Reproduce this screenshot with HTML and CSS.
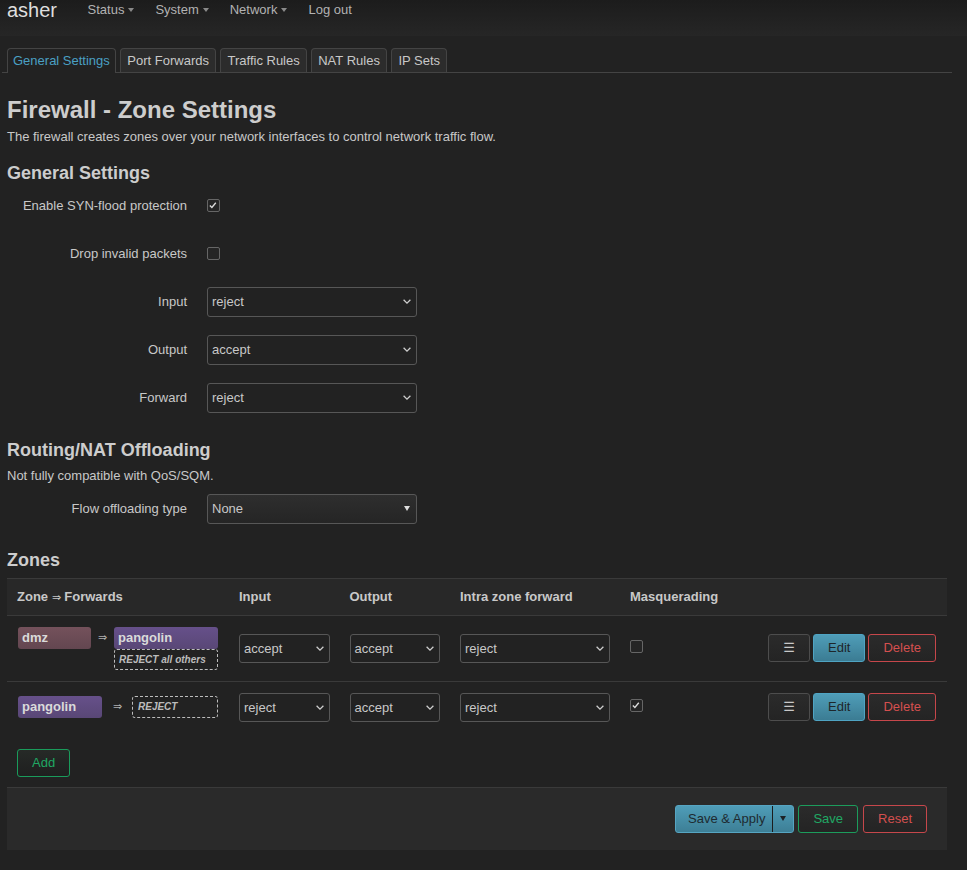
FILE: index.html
```html
<!DOCTYPE html>
<html lang="en">
<head>
<meta charset="utf-8">
<title>asher - Firewall - Zone Settings</title>
<link rel="stylesheet" href="styles.css">
</head>
<body>
<header class="topbar">
  <a class="brand">asher</a>
  <ul class="menu">
    <li>Status<span class="caret"></span></li>
    <li>System<span class="caret"></span></li>
    <li>Network<span class="caret"></span></li>
    <li>Log out</li>
  </ul>
</header>

<div class="main">
  <ul class="tabs">
    <li class="tab active">General Settings</li>
    <li class="tab">Port Forwards</li>
    <li class="tab">Traffic Rules</li>
    <li class="tab">NAT Rules</li>
    <li class="tab">IP Sets</li>
  </ul>

  <h2 class="title">Firewall - Zone Settings</h2>
  <p class="desc">The firewall creates zones over your network interfaces to control network traffic flow.</p>

  <h3 class="section">General Settings</h3>
  <div class="form">
    <div class="form-row">
      <div class="form-label">Enable SYN-flood protection</div>
      <span class="cb"><svg viewBox="0 0 13 13" width="11" height="11"><path d="M2.2 6.4 L4.6 8.8 L9.2 3.2" fill="none" stroke="#dcdcdc" stroke-width="1.6"/></svg></span>
    </div>
    <div class="form-row">
      <div class="form-label">Drop invalid packets</div>
      <span class="cb"></span>
    </div>
    <div class="form-row">
      <div class="form-label">Input</div>
      <div class="select"><span>reject</span><svg class="chev" viewBox="0 0 8 5" width="8" height="5"><path d="M0.6 0.8 L4 4.1 L7.4 0.8" fill="none" stroke="#cfcfcf" stroke-width="1.3"/></svg></div>
    </div>
    <div class="form-row">
      <div class="form-label">Output</div>
      <div class="select"><span>accept</span><svg class="chev" viewBox="0 0 8 5" width="8" height="5"><path d="M0.6 0.8 L4 4.1 L7.4 0.8" fill="none" stroke="#cfcfcf" stroke-width="1.3"/></svg></div>
    </div>
    <div class="form-row">
      <div class="form-label">Forward</div>
      <div class="select"><span>reject</span><svg class="chev" viewBox="0 0 8 5" width="8" height="5"><path d="M0.6 0.8 L4 4.1 L7.4 0.8" fill="none" stroke="#cfcfcf" stroke-width="1.3"/></svg></div>
    </div>
  </div>

  <h3 class="section section-routing">Routing/NAT Offloading</h3>
  <p class="desc desc-routing">Not fully compatible with QoS/SQM.</p>
  <div class="form form-offload">
    <div class="form-row">
      <div class="form-label">Flow offloading type</div>
      <div class="select select-flow"><span>None</span><span class="tri"></span></div>
    </div>
  </div>

  <h3 class="section section-zones">Zones</h3>
  <table class="zones">
    <colgroup>
      <col class="c-zone"><col class="c-in"><col class="c-out"><col class="c-intra"><col class="c-masq"><col class="c-act">
    </colgroup>
    <thead>
      <tr>
        <th>Zone <span class="th-arrow">⇒</span> Forwards</th>
        <th>Input</th>
        <th>Output</th>
        <th>Intra zone forward</th>
        <th>Masquerading</th>
        <th></th>
      </tr>
    </thead>
    <tbody>
      <tr>
        <td class="td-zone">
          <div class="zone-cell">
            <span class="zbadge z-dmz">dmz</span>
            <span class="arrow">⇒</span>
            <div class="fwd fwd-wide">
              <span class="zbadge z-pangolin">pangolin</span>
              <span class="reject">REJECT all others</span>
            </div>
          </div>
        </td>
        <td><div class="select sm"><span>accept</span><svg class="chev" viewBox="0 0 8 5" width="8" height="5"><path d="M0.6 0.8 L4 4.1 L7.4 0.8" fill="none" stroke="#cfcfcf" stroke-width="1.3"/></svg></div></td>
        <td><div class="select sm"><span>accept</span><svg class="chev" viewBox="0 0 8 5" width="8" height="5"><path d="M0.6 0.8 L4 4.1 L7.4 0.8" fill="none" stroke="#cfcfcf" stroke-width="1.3"/></svg></div></td>
        <td><div class="select sm"><span>reject</span><svg class="chev" viewBox="0 0 8 5" width="8" height="5"><path d="M0.6 0.8 L4 4.1 L7.4 0.8" fill="none" stroke="#cfcfcf" stroke-width="1.3"/></svg></div></td>
        <td><span class="cb cb-table"></span></td>
        <td class="td-act">
          <div class="act-btns">
            <button class="btn btn-menu">☰</button>
            <button class="btn btn-edit">Edit</button>
            <button class="btn btn-del">Delete</button>
          </div>
        </td>
      </tr>
      <tr>
        <td class="td-zone">
          <div class="zone-cell">
            <span class="zbadge z-pangolin z-pangolin-src">pangolin</span>
            <span class="arrow">⇒</span>
            <div class="fwd fwd-narrow">
              <span class="reject reject-only">REJECT</span>
            </div>
          </div>
        </td>
        <td><div class="select sm"><span>reject</span><svg class="chev" viewBox="0 0 8 5" width="8" height="5"><path d="M0.6 0.8 L4 4.1 L7.4 0.8" fill="none" stroke="#cfcfcf" stroke-width="1.3"/></svg></div></td>
        <td><div class="select sm"><span>accept</span><svg class="chev" viewBox="0 0 8 5" width="8" height="5"><path d="M0.6 0.8 L4 4.1 L7.4 0.8" fill="none" stroke="#cfcfcf" stroke-width="1.3"/></svg></div></td>
        <td><div class="select sm"><span>reject</span><svg class="chev" viewBox="0 0 8 5" width="8" height="5"><path d="M0.6 0.8 L4 4.1 L7.4 0.8" fill="none" stroke="#cfcfcf" stroke-width="1.3"/></svg></div></td>
        <td><span class="cb cb-table"><svg viewBox="0 0 13 13" width="11" height="11"><path d="M2.2 6.4 L4.6 8.8 L9.2 3.2" fill="none" stroke="#dcdcdc" stroke-width="1.6"/></svg></span></td>
        <td class="td-act">
          <div class="act-btns">
            <button class="btn btn-menu">☰</button>
            <button class="btn btn-edit">Edit</button>
            <button class="btn btn-del">Delete</button>
          </div>
        </td>
      </tr>
    </tbody>
  </table>

  <div class="add-wrap">
    <button class="btn btn-add">Add</button>
  </div>

  <div class="actions">
    <div class="split">
      <span class="split-main">Save &amp; Apply</span>
      <span class="split-drop"><span class="tri tri-dark"></span></span>
    </div>
    <button class="btn btn-save">Save</button>
    <button class="btn btn-reset">Reset</button>
  </div>
</div>
</body>
</html>
```

FILE: styles.css
```css
* {
  box-sizing: border-box;
}

html,
body {
  margin: 0;
  background: #222222;
}

body {
  font-family: "Liberation Sans", Arial, sans-serif;
  font-size: 13px;
  color: #c8c8c8;
}

/* ---------- top bar ---------- */
.topbar {
  height: 36px;
  display: flex;
  align-items: flex-start;
  padding-left: 7px;
  background: linear-gradient(#1c1c1c, #262626);
}

.brand {
  font-size: 20px;
  line-height: 20px;
  margin-top: 0;
  margin-right: 20px;
  color: #dedede;
}

.menu {
  display: flex;
  list-style: none;
  margin: 0;
  padding: 0;
}

.menu li {
  display: flex;
  align-items: center;
  gap: 4px;
  padding: 0 10.5px;
  line-height: 20px;
  color: #b2b2b2;
}

.caret {
  width: 0;
  height: 0;
  border-left: 3px solid transparent;
  border-right: 3px solid transparent;
  border-top: 4px solid #8a8a8a;
}

/* ---------- main ---------- */
.main {
  padding: 0 20px 20px 7px;
}

.tabs {
  display: flex;
  align-items: flex-start;
  gap: 4.5px;
  list-style: none;
  margin: 12px -5px 0 -5px;
  padding: 0 0 0 5px;
  border-bottom: 1px solid #444444;
}

.tab {
  height: 24px;
  line-height: 23px;
  padding: 0 6px;
  border: 1px solid #444444;
  border-bottom: none;
  border-radius: 4px 4px 0 0;
  background: #2c2c2c;
  color: #c8c8c8;
  white-space: nowrap;
}

.tab.active {
  height: 25px;
  margin-bottom: -1px;
  padding: 0 5px;
  background: #222222;
  color: #4aa0c4;
}

.title {
  margin: 22px 0 0;
  font-size: 24px;
  line-height: 30px;
  font-weight: bold;
  color: #cdcdcd;
}

.desc {
  margin: 2.5px 0 0;
  line-height: 18px;
}

.section {
  margin: 15px 0 0;
  font-size: 18px;
  line-height: 24px;
  font-weight: bold;
  color: #cdcdcd;
}

.section-routing {
  margin-top: 25px;
}

.desc-routing {
  margin-top: 5px;
}

.section-zones {
  margin-top: 24px;
}

/* ---------- form ---------- */
.form {
  margin-top: 6px;
  display: flex;
  flex-direction: column;
  gap: 18px;
}

.form-offload {
  margin-top: 9px;
}

.form-row {
  display: flex;
  align-items: center;
  height: 30px;
}

.form-label {
  width: 180px;
  margin-right: 20px;
  text-align: right;
  white-space: nowrap;
}

.cb {
  width: 13px;
  height: 13px;
  border: 1px solid #666666;
  border-radius: 2px;
  background: #252525;
  display: inline-flex;
  align-items: center;
  justify-content: center;
  flex: none;
}

.cb-table {
  display: flex;
  margin-top: -3px;
}

.select {
  display: flex;
  align-items: center;
  justify-content: space-between;
  width: 210px;
  height: 30px;
  padding: 0 5px 0 4px;
  border: 1px solid #575757;
  border-radius: 3px;
  background: #222222;
  color: #c8c8c8;
}

.select.sm {
  width: 100%;
  height: 29px;
}

.chev {
  flex: none;
}

.select-flow {
  padding-right: 6px;
  background: linear-gradient(#2e2e2e, #252525);
}

.tri {
  width: 0;
  height: 0;
  border-left: 3px solid transparent;
  border-right: 3px solid transparent;
  border-top: 5px solid #dddddd;
}

.tri-dark {
  border-left-width: 3.5px;
  border-right-width: 3.5px;
  border-top-color: #1c2226;
}

/* ---------- zones table ---------- */
.zones {
  width: 940px;
  margin-top: 6px;
  border-collapse: separate;
  border-spacing: 0;
  table-layout: fixed;
}

.c-zone { width: 222px; }
.c-in { width: 110.5px; }
.c-out { width: 110.5px; }
.c-intra { width: 170px; }
.c-masq { width: 140px; }

.zones th {
  padding: 9px 10px;
  line-height: 18px;
  text-align: left;
  font-weight: bold;
  color: #c8c8c8;
  background: #282828;
  border-top: 1px solid #3a3a3a;
  white-space: nowrap;
}

.th-arrow {
  font-weight: normal;
  font-size: 11px;
}

.zones td {
  padding: 11px 10px;
  border-top: 1px solid #3a3a3a;
  vertical-align: middle;
}

.zones td.td-zone {
  padding-left: 11px;
  padding-right: 11px;
}

.zone-cell {
  display: flex;
  justify-content: space-between;
  align-items: flex-start;
}

.zbadge {
  display: block;
  height: 22px;
  line-height: 22px;
  padding: 0 4px;
  border-radius: 3px;
  font-weight: bold;
  color: #dadada;
  white-space: nowrap;
}

.z-dmz {
  width: 73px;
  background: linear-gradient(#74515b, #634650);
}

.z-pangolin {
  background: linear-gradient(#66508a, #594776);
}

.z-pangolin-src {
  width: 84px;
}

.arrow {
  line-height: 20px;
  font-size: 11px;
  color: #b0b0b0;
}

.fwd {
  display: flex;
  flex-direction: column;
}

.fwd-wide {
  width: 104px;
}

.fwd-narrow {
  width: 86px;
}

.reject {
  display: block;
  height: 21px;
  line-height: 19px;
  padding: 0 4px;
  border: 1px dashed #bdbdbd;
  border-radius: 3px;
  font-size: 10px;
  font-weight: bold;
  font-style: italic;
  color: #bcbcbc;
  white-space: nowrap;
}

.reject-only {
  height: 22px;
  line-height: 20px;
  padding-left: 5px;
}

.td-act {
  padding-right: 11px !important;
}

.act-btns {
  display: flex;
  justify-content: flex-end;
  gap: 3px;
}

/* ---------- buttons ---------- */
.btn {
  height: 28px;
  padding: 0 14px;
  border: 1px solid #4a4a4a;
  border-radius: 3px;
  background: linear-gradient(#2b2b2b, #242424);
  font-family: "Liberation Sans", Arial, sans-serif;
  font-size: 13px;
  line-height: 26px;
  color: #c8c8c8;
  white-space: nowrap;
  cursor: pointer;
}

.btn-menu {
  font-family: "DejaVu Sans", sans-serif;
  font-size: 13px;
  border-color: #4d4d4d;
}

.btn-edit {
  border-color: #4fa4c3;
  background: linear-gradient(#4f9db8, #3b7c93);
  color: #1e262a;
}

.btn-del,
.btn-reset {
  border-color: #c6474b;
  color: #d4504f;
}

.btn-add {
  border-color: #1a9b5b;
  color: #20a863;
  background: linear-gradient(#262a27, #1f1f1f);
}

.add-wrap {
  margin-top: 16px;
  padding-left: 10px;
}

.actions {
  margin-top: 10px;
  display: flex;
  justify-content: flex-end;
  align-items: center;
  gap: 4px;
  padding: 17px 20px;
  border-top: 1px solid #3a3a3a;
  background: #2a2a2a;
}

.split {
  display: flex;
  height: 28px;
  border: 1px solid #56a5c2;
  border-radius: 3px;
  background: linear-gradient(#4f9db8, #3d7f96);
  color: #1e2a30;
}

.split-main {
  padding: 0 7px 0 12px;
  line-height: 26px;
  border-right: 1px solid #1c1c1c;
  white-space: nowrap;
}

.split-drop {
  width: 20px;
  display: flex;
  align-items: center;
  justify-content: center;
}

.btn-save {
  border-color: #1c9c5c;
  color: #21a864;
}

.btn-reset {
  margin-left: 1px;
}
```
